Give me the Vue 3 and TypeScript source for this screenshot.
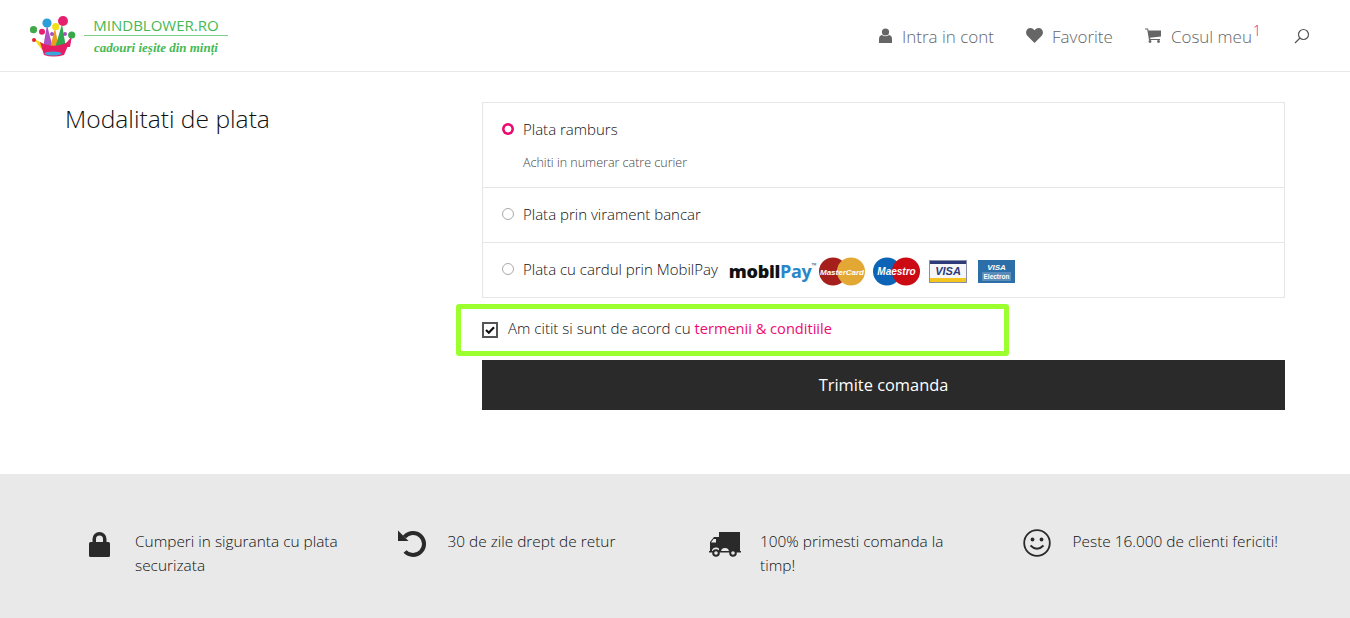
<script setup lang="ts">
interface Perk { text: string; icon: string }
const perks: Perk[] = [
  { text: 'Cumperi in siguranta cu plata securizata', icon: 'lock' },
  { text: '30 de zile drept de retur', icon: 'undo' },
  { text: '100% primesti comanda la timp!', icon: 'truck' },
  { text: 'Peste 16.000 de clienti fericiti!', icon: 'smile' },
]
</script>

<template>
  <div class="page">
    <header class="header">
      <a class="logo">
        <svg class="crown" width="48" height="44" viewBox="0 0 48 44">
          <path d="M5 25 L17 31 L16 36 L13 36 Z" fill="#f5d90a"/>
          <path d="M14 34 L18 11 L24 34 Z" fill="#b04fc0"/>
          <path d="M21 34 L26 14 L30 34 Z" fill="#e9a020"/>
          <path d="M26 34 L33 10 L37 34 Z" fill="#2fa84f"/>
          <path d="M34 33 L43 22 L41 33 Z" fill="#e5206f"/>
          <path d="M11 28 Q25 36 41 27 L35 41 Q24 44 15 41 Z" fill="#e51e63"/>
          <ellipse cx="24" cy="39.500" rx="8.500" ry="2" fill="#3ba6dc"/>
          <circle cx="4.500" cy="15.700" r="3.600" fill="#43a84a"/>
          <circle cx="13" cy="17.700" r="3" fill="#e5206f"/>
          <circle cx="18" cy="9" r="4.600" fill="#2d9fd8"/>
          <circle cx="26.700" cy="12.700" r="3.600" fill="#f3e01b"/>
          <circle cx="34" cy="7" r="5" fill="#e5206f"/>
          <circle cx="42.700" cy="21" r="3.600" fill="#35a84a"/>
          <circle cx="5" cy="26" r="2" fill="#e5202f"/>
          <circle cx="23" cy="20" r="2" fill="#a850c0"/>
          <circle cx="36" cy="20" r="2" fill="#a850c0"/>
        </svg>
        <span class="logo-text">
          <span class="logo-top">MINDBLOWER.RO</span>
          <span class="logo-line"></span>
          <span class="logo-sub">cadouri ieșite din minți</span>
        </span>
      </a>
      <nav class="nav">
        <a class="nav-item">
          <svg width="13" height="15" viewBox="0 0 13 15"><circle cx="6.500" cy="4" r="3.600" fill="#666"/><path d="M0 15 V11 Q0 7.500 3 7 Q6.500 9.500 10 7 Q13 7.500 13 11 V15 Z" fill="#666"/></svg>
          <span>Intra in cont</span>
        </a>
        <a class="nav-item heart">
          <svg width="17" height="15" viewBox="0 0 17 15"><path d="M8.500 15 L1.300 7.800 C-1.500 4.500 .8 0 4.400 0 C6.300 0 7.600 1 8.500 2.300 C9.400 1 10.700 0 12.600 0 C16.200 0 18.500 4.500 15.700 7.800 Z" fill="#666"/></svg>
          <span>Favorite</span>
        </a>
        <a class="nav-item cart">
          <svg width="16" height="15" viewBox="0 0 16 15"><path d="M0 .5 H3 L3.500 2.500 H16 V8.500 L5 9.800 L5.300 11 H15 V12 H4 L2.200 1.500 H0 Z" fill="#666"/><circle cx="5" cy="13.500" r="1.400" fill="#666"/><circle cx="13.500" cy="13.500" r="1.400" fill="#666"/></svg>
          <span>Cosul meu</span>
          <sup class="count">1</sup>
        </a>
        <svg class="search" width="16" height="16" viewBox="0 0 16 16" fill="none" stroke="#555" stroke-width="1.200"><circle cx="9.500" cy="6.500" r="5"/><path d="M6 10 L1 15"/></svg>
      </nav>
    </header>

    <main class="main">
      <h2 class="title">Modalitati de plata</h2>
      <section class="payment">
        <div class="methods">
          <div class="method first">
            <label class="method-label"><span class="radio active"></span>Plata ramburs</label>
            <p class="hint">Achiti in numerar catre curier</p>
          </div>
          <div class="method">
            <label class="method-label"><span class="radio"></span>Plata prin virament bancar</label>
          </div>
          <div class="method">
            <label class="method-label">
              <span class="radio"></span>Plata cu cardul prin MobilPay
              <span class="cards">
                <span class="mobilpay"><b>mobil</b><i>Pay</i><small>™</small></span>
                <svg class="card" width="48" height="29" viewBox="0 0 48 29">
                  <circle cx="15" cy="14.500" r="14" fill="#a5201c"/><circle cx="33" cy="14.500" r="14" fill="#e3a834"/>
                  <text x="24" y="17.500" text-anchor="middle" class="mc">MasterCard</text>
                </svg>
                <svg class="card" width="49" height="29" viewBox="0 0 49 29">
                  <circle cx="15" cy="14.500" r="14" fill="#0d63b5"/><circle cx="34" cy="14.500" r="14" fill="#cc0a14"/>
                  <text x="24.500" y="18" text-anchor="middle" class="mc big">Maestro</text>
                </svg>
                <svg class="card" width="38" height="23" viewBox="0 0 38 23">
                  <rect x=".5" y=".5" width="37" height="22" fill="#f6f6f6" stroke="#8a8fa8"/>
                  <rect x="1" y="1" width="36" height="3" fill="#2d3a7a"/><rect x="1" y="18" width="36" height="4" fill="#f4c51f"/>
                  <text x="19" y="15" text-anchor="middle" class="visa">VISA</text>
                </svg>
                <svg class="card" width="37" height="23" viewBox="0 0 37 23">
                  <rect width="37" height="23" fill="#2c6ea8"/><rect x="4" y="12" width="29" height="9" fill="#dfe8f0" opacity=".25"/>
                  <text x="18.500" y="10" text-anchor="middle" class="ve">VISA</text>
                  <text x="18.500" y="19" text-anchor="middle" class="ve small">Electron</text>
                </svg>
              </span>
            </label>
          </div>
        </div>

        <label class="terms">
          <span class="check">
            <svg width="10" height="8" viewBox="0 0 10 8"><path d="M1 4 L3.800 6.700 L9 1.300" fill="none" stroke="#111" stroke-width="2.200"/></svg>
          </span>
          <span>Am citit si sunt de acord cu <a class="link">termenii &amp; conditiile</a></span>
        </label>

        <button class="submit" type="button">Trimite comanda</button>
      </section>
    </main>

    <footer class="footer">
      <div v-for="p in perks" :key="p.icon" class="perk">
        <span class="perk-icon">
          <svg v-if="p.icon === 'lock'" width="23" height="26" viewBox="0 0 23 26" class="i-lock"><path d="M4.500 11 V8 a7 7 0 0 1 14 0 V11 H15 V8 a3.500 3.500 0 0 0 -7 0 V11 Z" fill="#2a2a2a"/><rect x="1" y="11" width="21" height="15" rx="1.500" fill="#2a2a2a"/></svg>
          <svg v-else-if="p.icon === 'undo'" width="28" height="28" viewBox="0 0 28 28" class="i-undo"><path d="M6.500 8 A11 11 0 1 1 7 22.500" fill="none" stroke="#2a2a2a" stroke-width="4"/><path d="M0 1.500 V12 H10.500 Z" fill="#2a2a2a"/></svg>
          <svg v-else-if="p.icon === 'truck'" width="32" height="26" viewBox="0 0 32 26" class="i-truck"><path d="M10 0 H31 V20 H20 a4 4 0 0 0 -8 0 H10 Z" fill="#2a2a2a"/><path d="M11 5 H5 L1 10 V20 H3 a4 4 0 0 1 8 -1 Z" fill="#2a2a2a"/><path d="M4.500 7 H7 V10.500 H2 Z" fill="#e9e9e9"/><rect y="19" width="32" height="1.500" fill="#2a2a2a"/><circle cx="7" cy="21" r="2.800" fill="#e9e9e9" stroke="#2a2a2a" stroke-width="2"/><circle cx="24" cy="21" r="2.800" fill="#e9e9e9" stroke="#2a2a2a" stroke-width="2"/></svg>
          <svg v-else width="28" height="28" viewBox="0 0 28 28" class="i-smile" fill="none" stroke="#2a2a2a"><circle cx="14" cy="14" r="12.800" stroke-width="1.800"/><circle cx="9.500" cy="10.500" r="1.900" fill="#2a2a2a" stroke="none"/><circle cx="18.500" cy="10.500" r="1.900" fill="#2a2a2a" stroke="none"/><path d="M7.500 16.500 Q14 23 20.500 16.500" stroke-width="1.800"/></svg>
        </span>
        <p class="perk-text">{{ p.text }}</p>
      </div>
    </footer>
  </div>
</template>

<style>
html, body { margin: 0; padding: 0; background: #fff; }
</style>

<style scoped>
.page {
  width: 1350px;
  height: 618px;
  overflow: hidden;
  font-family: "Open Sans", "Noto Sans", sans-serif;
  color: #222;
  display: flex;
  flex-direction: column;
}
.header {
  height: 71px;
  border-bottom: 1px solid #e8e8e8;
  display: flex;
  align-items: center;
  justify-content: space-between;
  padding: 0 40px 0 29px;
  flex: none;
}
.logo { display: flex; align-items: flex-start; gap: 7px; }
.crown { display: block; margin-top: 1px; }
.logo-text { display: flex; flex-direction: column; align-items: center; width: 144px; color: #45b955; margin-top: 2px; }
.logo-top { font-size: 15px; line-height: 20px; white-space: nowrap; font-weight: 400; }
.logo-line { display: block; width: 144px; height: 1px; background: #7fd08a; margin-bottom: 4px; }
.logo-sub { font-family: "Liberation Serif", serif; font-style: italic; font-weight: 700; font-size: 13px; line-height: 16px; white-space: nowrap; }
.nav { display: flex; align-items: center; color: #666; font-size: 17px; font-weight: 300; line-height: 24px; }
.nav-item { display: flex; align-items: center; margin-right: 32px; position: relative; white-space: nowrap; }
.nav-item span { position: relative; top: 1px; }
.nav-item svg { margin-right: 10px; }
.heart svg { margin-right: 9px; }
.cart { margin-right: 42px; }
.count { position: absolute; right: -9px; top: -1px; color: #ec0b70; font-size: 14px; font-weight: 300; line-height: 16px; margin: 0; }
.search { display: block; margin-top: 0; }
.main {
  flex: 1;
  display: flex;
  padding: 30px 65px 0;
}
.title {
  width: 417px;
  flex: none;
  margin: 0;
  font-size: 24.600px;
  line-height: 34px;
  font-weight: 300;
  color: #111;
}
.payment { width: 803px; flex: none; }
.methods { border: 1px solid #e6e6e6; }
.method { height: 54px; border-top: 1px solid #e6e6e6; padding: 0 19px; box-sizing: content-box; }
.method.first { height: 84px; border-top: 0; }
.method-label { display: flex; align-items: center; font-size: 15px; font-weight: 300; color: #111; height: 52px; padding-bottom: 2px; white-space: nowrap; }
.method.first .method-label { height: 52px; padding-bottom: 0; }
.radio {
  width: 10px;
  height: 10px;
  border: 1px solid #aaa;
  border-radius: 50%;
  margin-right: 9px;
  flex: none;
}
.radio.active {
  width: 12px;
  height: 12px;
  border: 0;
  background: radial-gradient(circle, #fff 3.200px, #ec0b70 3.700px);
}
.hint { margin: -1px 0 0 21px; font-size: 12.500px; font-weight: 300; line-height: 18px; color: #444; }
.cards { display: flex; align-items: center; margin: 4px 0 0 11px; }
.mobilpay { display: flex; align-items: baseline; font-size: 18px; width: 89px; letter-spacing: -.3px; }
.mobilpay b { color: #111; font-weight: 800; }
.mobilpay i { color: #2a86c8; font-style: normal; font-weight: 700; }
.mobilpay small { font-size: 7px; align-self: flex-start; margin-top: 2px; }
.card { display: block; flex: none; margin-right: 6px; }
.card:nth-of-type(2) { margin-right: 8px; }
.card:nth-of-type(3) { margin-right: 11px; }
.mc { font: italic 700 8px "Liberation Sans", sans-serif; fill: #fff; }
.mc.big { font-size: 10px; }
.visa { font: italic 800 11px "Liberation Sans", sans-serif; fill: #2d3a7a; }
.ve { font: italic 700 8px "Liberation Sans", sans-serif; fill: #fff; }
.ve.small { font-style: normal; font-size: 6.500px; }
.terms {
  margin: 6px 0 4px -26px;
  width: 553px;
  height: 52px;
  box-sizing: border-box;
  border: 5px solid #9cff2e;
  border-radius: 3px;
  display: flex;
  align-items: center;
  padding: 0 0 5px 21px;
  font-size: 15.100px;
  font-weight: 300;
  color: #111;
  white-space: nowrap;
}
.check {
  width: 12px;
  height: 12px;
  border: 2px solid #555;
  display: flex;
  align-items: center;
  justify-content: center;
  margin: 5px 10px 0 0;
  box-sizing: content-box;
  flex: none;
}
.link { color: #ec0b70; font-weight: 400; font-size: 14.600px; }
.submit {
  display: block;
  width: 100%;
  height: 50px;
  background: #2a2a2a;
  color: #fff;
  border: 0;
  padding: 0 0 2px;
  font: 400 16.400px "Open Sans", sans-serif;
}
.footer {
  height: 144px;
  flex: none;
  background: #e9e9e9;
  display: grid;
  grid-template-columns: repeat(4, 312.500px);
  padding: 56px 0 0 85px;
  box-sizing: border-box;
}
.perk { display: flex; align-items: flex-start; }
.perk-icon { width: 50px; flex: none; display: block; }
.perk-icon svg { display: block; }
.i-lock { margin: 1px 0 0 3px; }
.i-undo { margin: -1px 0 0 0; }
.i-truck { margin: 2px 0 0 -1px; }
.i-smile { margin: -1px 0 0 0; }
.perk-text { margin: 0; width: 212px; font-size: 15.400px; font-weight: 300; line-height: 24px; color: #111; }
</style>
